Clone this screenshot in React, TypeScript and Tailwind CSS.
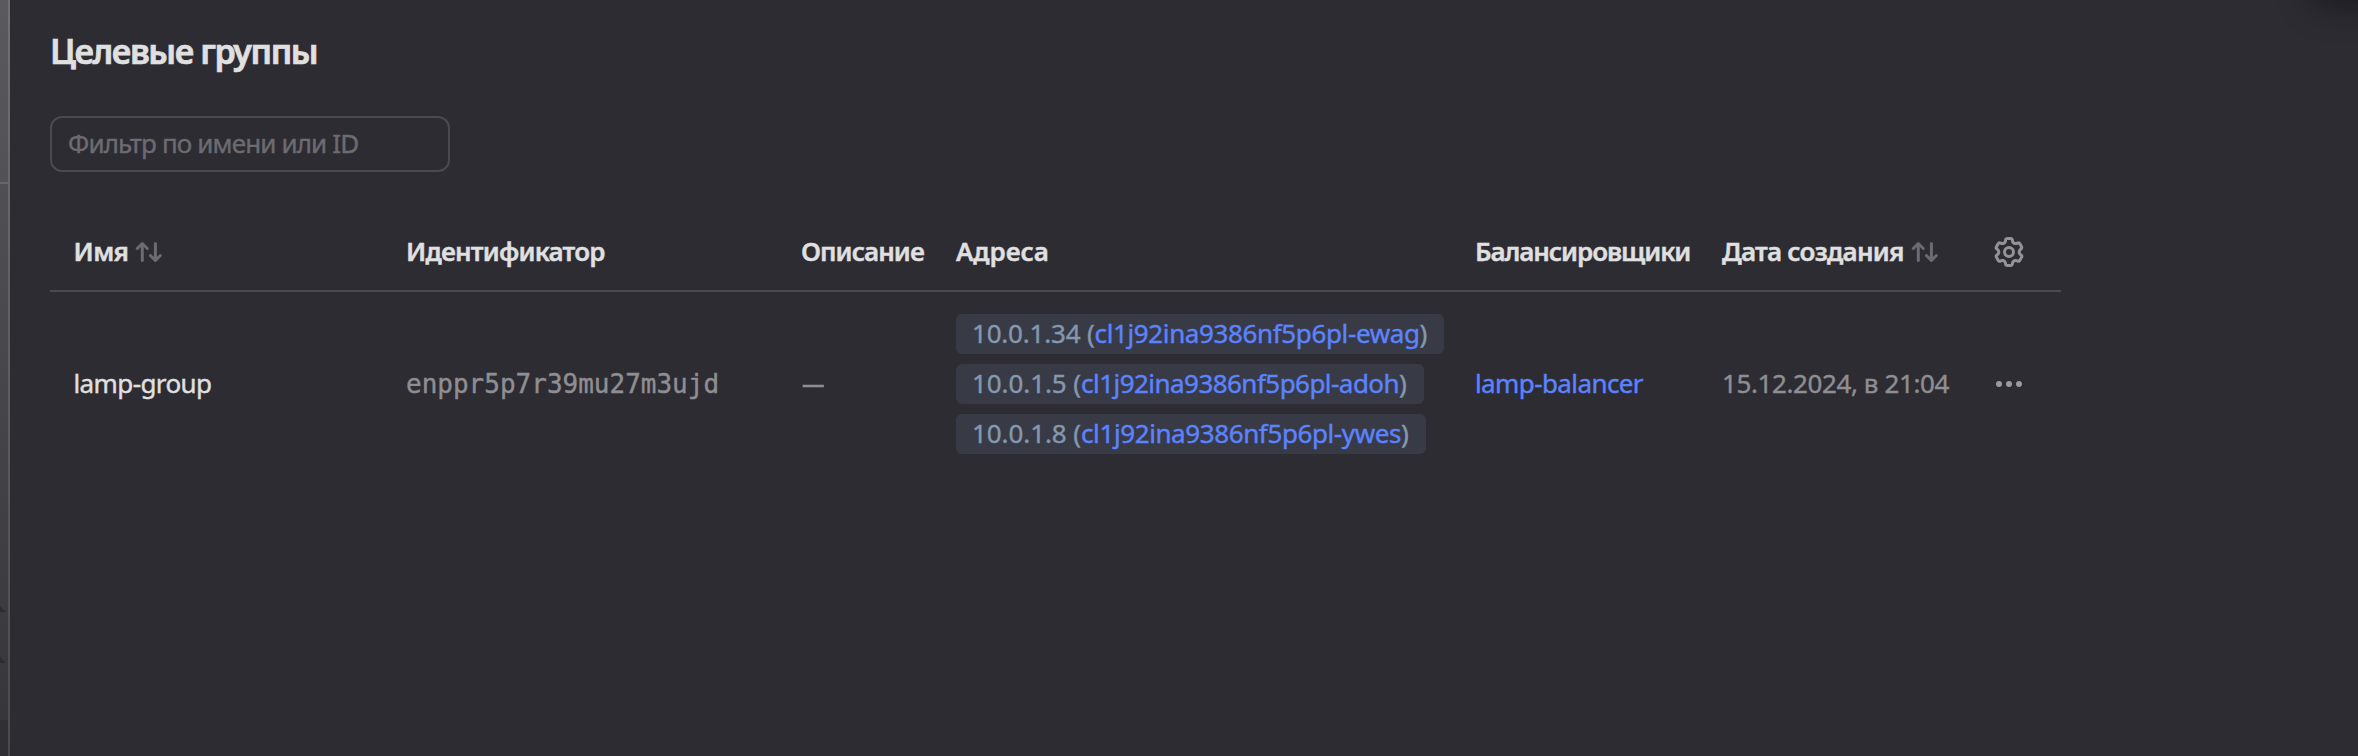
const columns =
  "grid grid-cols-[332.5px_395px_155px_519px_247px_271px_1fr] items-center pl-[23.5px]";

const addresses = [
  { ip: "10.0.1.34", host: "cl1j92ina9386nf5p6pl-ewag", size: "w-[488px]", ipTracking: "tracking-[-0.2px]", tracking: "tracking-[-0.37px]" },
  { ip: "10.0.1.5", host: "cl1j92ina9386nf5p6pl-adoh", size: "w-[468px]", ipTracking: "tracking-[-0.08px]", tracking: "tracking-[-0.54px]" },
  { ip: "10.0.1.8", host: "cl1j92ina9386nf5p6pl-ywes", size: "w-[470px]", ipTracking: "tracking-[-0.08px]", tracking: "tracking-[-0.4px]" },
];

function SortIcon() {
  return (
    <svg
      className="mt-px h-6 w-[30px] shrink-0 text-[#6c6b6f]"
      viewBox="0 0 30 24"
      fill="none"
      stroke="currentColor"
      strokeWidth="3"
      strokeLinecap="round"
      strokeLinejoin="round"
    >
      <path d="M8.3 20.5V3.5M3.3 8.5l5-5 5 5" />
      <path d="M21.4 3.5v17M16.4 15.5l5 5 5-5" />
    </svg>
  );
}

function GearIcon() {
  return (
    <svg className="size-8" viewBox="0 0 16 16" fill="currentColor">
      <path
        fillRule="evenodd"
        clipRule="evenodd"
        d="M7.199 2H8.8a.2.2 0 0 1 .2.2c0 1.808 1.958 2.939 3.524 2.034a.199.199 0 0 1 .271.073l.802 1.388a.199.199 0 0 1-.073.272c-1.566.904-1.566 3.164 0 4.069a.199.199 0 0 1 .073.271l-.802 1.388a.199.199 0 0 1-.271.073C10.958 10.863 9 11.993 9 13.8a.2.2 0 0 1-.2.2H7.2a.199.199 0 0 1-.2-.2c0-1.808-1.958-2.938-3.524-2.034a.199.199 0 0 1-.272-.073l-.8-1.388a.199.199 0 0 1 .072-.271c1.566-.905 1.566-3.165 0-4.07a.199.199 0 0 1-.073-.271l.801-1.388a.199.199 0 0 1 .272-.073C5.042 5.138 7 4.007 7 2.2c0-.11.089-.199.199-.199M5.5 2.2c0-.94.76-1.7 1.699-1.7H8.8c.94 0 1.7.76 1.7 1.7a.85.85 0 0 0 1.274.735 1.699 1.699 0 0 1 2.32.622l.802 1.388c.469.813.19 1.851-.622 2.32a.85.85 0 0 0 0 1.472 1.7 1.7 0 0 1 .622 2.32l-.802 1.388a1.699 1.699 0 0 1-2.32.622.85.85 0 0 0-1.274.735c0 .939-.76 1.7-1.699 1.7H7.2a1.7 1.7 0 0 1-1.699-1.7.85.85 0 0 0-1.274-.735 1.698 1.698 0 0 1-2.32-.622l-.802-1.388a1.699 1.699 0 0 1 .622-2.32.85.85 0 0 0 0-1.471 1.699 1.699 0 0 1-.622-2.321l.801-1.388a1.699 1.699 0 0 1 2.32-.622A.85.85 0 0 0 5.5 2.2m4 5.8a1.5 1.5 0 1 1-3 0 1.5 1.5 0 0 1 3 0M11 8a3 3 0 1 1-6 0 3 3 0 0 1 6 0"
      />
    </svg>
  );
}

function MoreIcon() {
  return (
    <svg className="size-8" viewBox="0 0 32 32" fill="currentColor">
      <circle cx="6" cy="16" r="3" />
      <circle cx="16" cy="16" r="3" />
      <circle cx="26" cy="16" r="3" />
    </svg>
  );
}

function Backdrop() {
  return (
    <aside className="flex w-2.5 shrink-0">
      <div className="flex w-2 flex-col">
        <div className="h-[182px] bg-linear-to-b from-[#5a595d] to-[#525156]" />
        <div className="h-0.5 bg-[#68676b]" />
        <div className="flex h-[536px] flex-col bg-linear-to-b from-[#504f54] to-[#37363b] pt-[420px]">
          <svg className="h-2 w-1.5 text-[#2d2c31]" viewBox="0 0 6 8" fill="currentColor">
            <path d="M0 2l6 6H0z" />
          </svg>
          <svg className="mt-[43px] h-2 w-1.5 text-[#2d2c31]" viewBox="0 0 6 8" fill="currentColor">
            <path d="M0 2l6 6H0z" />
          </svg>
        </div>
        <div className="flex-1 bg-[#302f34]" />
      </div>
      <div className="w-0.5 bg-linear-to-b from-[#717074] to-[#4b4a4f]" />
    </aside>
  );
}

export default function App() {
  return (
    <div className="flex h-[756px] w-[2358px] overflow-hidden bg-[#2d2c33] font-['Noto_Sans',sans-serif] text-[26px] leading-9 text-[#e0e0e0] [-webkit-text-stroke:0.4px]">
      <Backdrop />
      <main className="relative flex-1 overflow-hidden pl-10">
        <div className="absolute -top-10 right-[-60px] h-12 w-[110px] rounded-full bg-black/40 blur-lg" />
        <h1 className="mt-[27px] text-[34px] leading-12 font-semibold tracking-[-1.4px] [-webkit-text-stroke:0.7px]">
          Целевые группы
        </h1>
        <input
          className="mt-[41px] block h-14 w-[400px] rounded-xl border-2 border-[#4b4a50] bg-transparent px-4 pb-0.5 tracking-[-0.86px] outline-none placeholder:text-[#6c6b70]"
          placeholder="Фильтр по имени или ID"
        />
        <section className="mt-10 w-[2011px]">
          <div className={`${columns} h-20 border-b-2 border-[#4b4a50] font-semibold`}>
            <div className="flex items-center gap-1.5">
              <span className="tracking-[-0.6px]">Имя</span>
              <SortIcon />
            </div>
            <div className="tracking-[-0.8px]">Идентификатор</div>
            <div className="tracking-[-0.95px]">Описание</div>
            <div className="tracking-[-0.1px]">Адреса</div>
            <div className="tracking-[-1.08px]">Балансировщики</div>
            <div className="flex items-center gap-1.5">
              <span className="tracking-[-0.77px]">Дата создания</span>
              <SortIcon />
            </div>
            <div className="pt-0.5 text-[#939296]">
              <GearIcon />
            </div>
          </div>
          <div className={`${columns} mt-[22px] text-[#8f8e92]`}>
            <div className="pb-0.5 tracking-[-0.6px] text-[#e0e0e0]">lamp-group</div>
            <div className="font-['DejaVu_Sans_Mono',monospace]">enppr5p7r39mu27m3ujd</div>
            <div className="flex pb-[3px] pl-px">
              <span className="inline-block origin-left scale-x-[0.87]">—</span>
            </div>
            <div className="flex flex-col gap-2.5">
              {addresses.map((address) => (
                <div
                  key={address.host}
                  className={`${address.size} h-10 rounded-md bg-[#383b46] px-4 leading-[38px] whitespace-pre text-[#8498ae]`}
                >
                  <span className={address.ipTracking}>{address.ip} (</span>
                  <a className={`${address.tracking} text-[#5c83ff]`}>{address.host}</a>)
                </div>
              ))}
            </div>
            <div className="pb-0.5 tracking-[-0.6px] text-[#5c83ff]">lamp-balancer</div>
            <div className="pb-0.5 tracking-[-0.4px]">15.12.2024, в 21:04</div>
            <div className="text-[#9b9a9d]">
              <MoreIcon />
            </div>
          </div>
        </section>
      </main>
    </div>
  );
}
